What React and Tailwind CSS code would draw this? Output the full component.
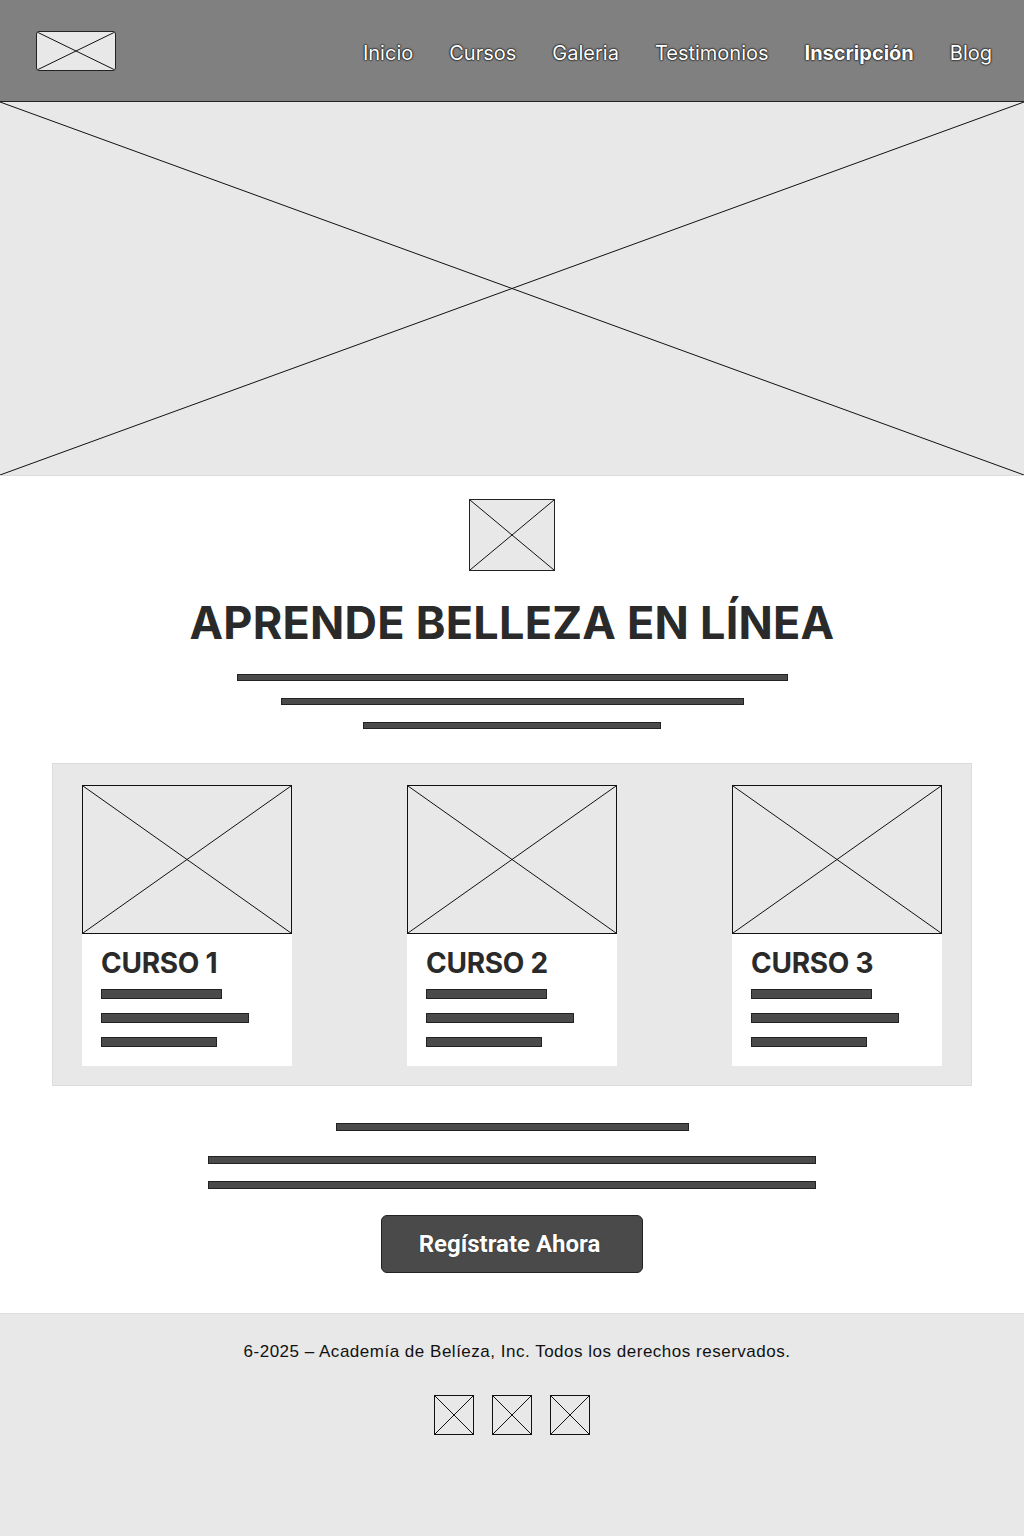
import React from 'react';

const XBox = ({ className = '', stroke = '#111' }) => (
  <div className={`relative overflow-hidden ${className}`}>
    <svg className="absolute inset-0 h-full w-full" viewBox="0 0 100 100" preserveAspectRatio="none">
      <line x1="0" y1="0" x2="100" y2="100" stroke={stroke} strokeWidth="1" vectorEffect="non-scaling-stroke" />
      <line x1="100" y1="0" x2="0" y2="100" stroke={stroke} strokeWidth="1" vectorEffect="non-scaling-stroke" />
    </svg>
  </div>
);

const Bar = ({ className = '' }) => (
  <div className={`bg-[#4a4a4a] border border-[#222] ${className}`} />
);

const navItems = [
  { label: 'Inicio' },
  { label: 'Cursos' },
  { label: 'Galeria' },
  { label: 'Testimonios' },
  { label: 'Inscripción', bold: true },
  { label: 'Blog' },
];

const courses = [
  { title: 'CURSO 1' },
  { title: 'CURSO 2' },
  { title: 'CURSO 3' },
];

const CourseCard = ({ title }) => (
  <div className="w-[210px] flex flex-col">
    <XBox className="h-[149px] border border-[#111] bg-[#e8e8e8]" />
    <div className="h-[132px] bg-white pl-[19px] pt-[15px]">
      <h3 className="text-[28px] font-bold leading-none text-[#2a2a2a] tracking-[-0.01em]">{title}</h3>
      <div className="mt-[12px] flex flex-col gap-[14px]">
        <Bar className="h-[10px] w-[121px]" />
        <Bar className="h-[10px] w-[148px]" />
        <Bar className="h-[10px] w-[116px]" />
      </div>
    </div>
  </div>
);

export default function App() {
  return (
    <div className="min-h-[1536px] flex flex-col bg-white font-['Inter',sans-serif]">
      <header className="h-[102px] bg-[#808080] border-b border-[#222] flex items-center justify-between pl-[36px] pr-[32px]">
        <XBox className="h-[40px] w-[80px] rounded-[3px] border border-[#222] bg-[#e8e8e8]" />
        <nav className="flex items-center gap-[36px] pt-[4px]">
          {navItems.map((item) => (
            <a
              key={item.label}
              className={`text-[20px] text-white [text-shadow:0_0_1px_#111,0_0_2px_#111,0_0_2px_#111] ${item.bold ? 'font-bold' : 'font-normal'}`}
            >
              {item.label}
            </a>
          ))}
        </nav>
      </header>

      <section className="h-[374px] bg-[#e8e8e8] border-b border-[#dcdcdc]">
        <XBox className="h-full w-full" />
      </section>

      <main className="flex flex-col items-center pt-[23px] pb-[40px]">
        <XBox className="h-[72px] w-[86px] border border-[#222] bg-[#e8e8e8]" />
        <h1 className="mt-[29px] text-[45px] font-bold leading-none text-[#2a2a2a] tracking-[0.005em]">
          APRENDE BELLEZA EN LÍNEA
        </h1>
        <div className="mt-[29px] flex flex-col items-center gap-[17px]">
          <Bar className="h-[7px] w-[551px]" />
          <Bar className="h-[7px] w-[463px]" />
          <Bar className="h-[7px] w-[298px]" />
        </div>

        <div className="mt-[34px] w-[920px] bg-[#e8e8e8] border border-[#dcdcdc] flex justify-between px-[29px] pt-[21px] pb-[19px]">
          {courses.map((c) => (
            <CourseCard key={c.title} title={c.title} />
          ))}
        </div>

        <div className="mt-[37px] flex flex-col items-center">
          <Bar className="h-[8px] w-[353px]" />
          <Bar className="mt-[25px] h-[8px] w-[608px]" />
          <Bar className="mt-[17px] h-[8px] w-[608px]" />
        </div>

        <button className="mt-[26px] h-[58px] w-[262px] rounded-[6px] border border-[#222] bg-[#4a4a4a] pr-[5px] font-['Roboto',sans-serif] text-[24px] font-bold text-white [text-shadow:0_0_1px_#111]">
          Regístrate Ahora
        </button>
      </main>

      <footer className="flex-1 bg-[#e8e8e8] border-t border-[#dcdcdc] flex flex-col items-center pt-[25px] pl-[10px]">
        <p className="font-['Liberation_Sans',Arial,sans-serif] text-[17px] tracking-[0.03em] text-[#111]">
          6-2025 – Academía de Belíeza, Inc. Todos los derechos reservados.
        </p>
        <div className="mt-[30px] -ml-[10px] flex gap-[18px]">
          {[0, 1, 2].map((i) => (
            <XBox key={i} className="h-[40px] w-[40px] border border-[#111] bg-[#e8e8e8]" />
          ))}
        </div>
      </footer>
    </div>
  );
}
